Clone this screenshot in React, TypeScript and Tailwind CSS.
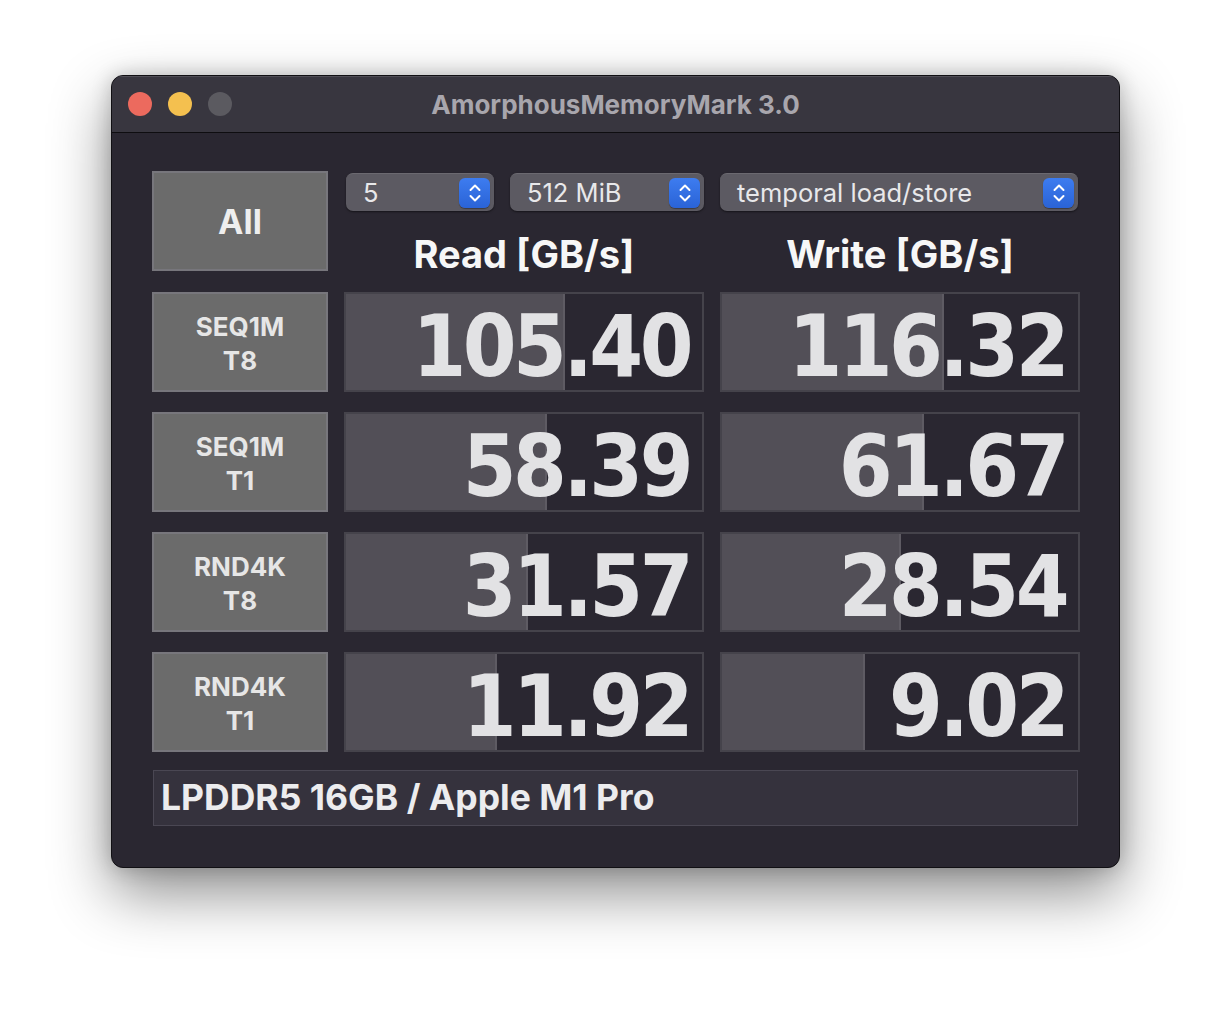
import React from "react";

const SANS = "font-['Inter','Noto_Sans',sans-serif]";
const NUM = "font-['DejaVu_Sans_Condensed','DejaVu_Sans',sans-serif] [font-stretch:condensed]";

function Stepper() {
  return (
    <div className="flex h-[30px] w-[31px] items-center justify-center rounded-[6px] bg-gradient-to-b from-[#3d7cf0] to-[#2a63d6] shadow-[0_1px_1px_rgba(0,0,0,0.35)]">
      <svg width="14" height="22" viewBox="0 0 14 22" fill="none">
        <path d="M2.5 8 L7 3.5 L11.5 8" stroke="white" strokeWidth="2" strokeLinecap="round" strokeLinejoin="round" />
        <path d="M2.5 14 L7 18.5 L11.5 14" stroke="white" strokeWidth="2" strokeLinecap="round" strokeLinejoin="round" />
      </svg>
    </div>
  );
}

function Select({ label, width }: { label: string; width: string }) {
  return (
    <div className={`flex h-[38px] ${width} items-center justify-between rounded-[7px] border-t border-[#6b6970] bg-[#5c5a62] pl-[17px] pr-[4px] shadow-[0_1px_2px_rgba(0,0,0,0.5)]`}>
      <span className={`${SANS} text-[25.5px] leading-none text-[#e8e8ea]`}>{label}</span>
      <Stepper />
    </div>
  );
}

function Label({ a, b }: { a: string; b: string }) {
  return (
    <div className={`flex h-[100px] w-[176px] flex-col items-center justify-center border-2 border-[#77767c] bg-[#6b6b6b] pt-[4px] ${SANS} text-[26px] font-bold leading-[34px] text-[#e6e6e6]`}>
      <span>{a}</span>
      <span>{b}</span>
    </div>
  );
}

function Cell({ value, bar }: { value: string; bar: number }) {
  return (
    <div className="relative flex h-[100px] w-[360px] items-center justify-end border-2 border-[#45434b] bg-[#2a2731]">
      <div className="absolute left-0 top-0 h-full border-r-2 border-[#5e5b63] bg-[#524f57]" style={{ width: bar }} />
      <span className={`relative ${NUM} whitespace-nowrap pr-[12px] pt-[8px] text-[86px] font-bold leading-none tracking-[-3.5px] text-[#e2e2e4]`}>
        {value}
      </span>
    </div>
  );
}

const rows = [
  { a: "SEQ1M", b: "T8", r: "105.40", rb: 219, w: "116.32", wb: 222 },
  { a: "SEQ1M", b: "T1", r: "58.39", rb: 201, w: "61.67", wb: 202 },
  { a: "RND4K", b: "T8", r: "31.57", rb: 182, w: "28.54", wb: 179 },
  { a: "RND4K", b: "T1", r: "11.92", rb: 151, w: "9.02", wb: 143 },
];

export default function App() {
  return (
    <div className="h-[1016px] w-[1232px] bg-white pl-[111px] pt-[75px]">
      <div className="flex h-[793px] w-[1009px] flex-col overflow-hidden rounded-[12px] border border-[#111014] bg-[#2a2731] shadow-[0_25px_60px_rgba(0,0,0,0.45),0_0_20px_rgba(0,0,0,0.2)]">
        {/* title bar */}
        <div className="relative flex h-[57px] shrink-0 items-center border-b border-[#0e0d10] bg-[#38363f] shadow-[inset_0_1px_0_rgba(255,255,255,0.12)]">
          <div className="flex gap-[16px] pl-[16px]">
            <div className="h-[24px] w-[24px] rounded-full bg-[#ec6a5e]" />
            <div className="h-[24px] w-[24px] rounded-full bg-[#f4c04f]" />
            <div className="h-[24px] w-[24px] rounded-full bg-[#5b5a60]" />
          </div>
          <div className={`absolute inset-0 flex items-center justify-center ${SANS} text-[26px] font-bold text-[#a8a6ad]`}>
            AmorphousMemoryMark 3.0
          </div>
        </div>

        {/* content */}
        <div className="flex flex-col pl-[40px] pt-[38px]">
          <div className="flex gap-[16px]">
            <div className={`flex h-[100px] w-[176px] items-center justify-center border-2 border-[#77767c] bg-[#6b6b6b] ${SANS} text-[34px] font-bold text-[#eeeeee]`}>
              All
            </div>
            <div className="flex w-[360px] flex-col pt-[2px]">
              <div className="flex gap-[16px] pl-[2px]">
                <Select label="5" width="w-[148px]" />
                <Select label="512 MiB" width="w-[194px]" />
              </div>
              <div className={`mt-[23px] text-center ${SANS} text-[38px] font-bold leading-[40px] text-[#f7f7f7]`}>
                Read [GB/s]
              </div>
            </div>
            <div className="flex w-[360px] flex-col pt-[2px]">
              <Select label="temporal load/store" width="w-[358px]" />
              <div className={`mt-[23px] text-center ${SANS} text-[38px] font-bold leading-[40px] text-[#f7f7f7]`}>
                Write [GB/s]
              </div>
            </div>
          </div>

          <div className="mt-[18px] flex flex-col gap-[20px]">
            {rows.map((r) => (
              <div key={r.a + r.b} className="flex gap-[16px]">
                <Label a={r.a} b={r.b} />
                <Cell value={r.r} bar={r.rb} />
                <Cell value={r.w} bar={r.wb} />
              </div>
            ))}
          </div>

          <div className="ml-[1px] mt-[18px] flex h-[56px] w-[925px] items-center border border-[#4a4753] bg-[#35323d] pl-[7px]">
            <span className={`${SANS} text-[35.5px] font-bold text-[#ececee]`}>LPDDR5 16GB / Apple M1 Pro</span>
          </div>
        </div>
      </div>
    </div>
  );
}
